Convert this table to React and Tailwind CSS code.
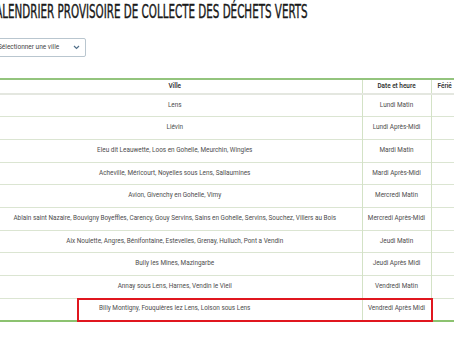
const ROWS = [
  ['Lens', 'Lundi Matin'],
  ['Liévin', 'Lundi Après-Midi'],
  ['Eleu dit Leauwette, Loos en Gohelle, Meurchin, Wingles', 'Mardi Matin'],
  ['Acheville, Méricourt, Noyelles sous Lens, Sallaumines', 'Mardi Après-Midi'],
  ['Avion, Givenchy en Gohelle, Vimy', 'Mercredi Matin'],
  [
    'Ablain saint Nazaire, Bouvigny Boyeffles, Carency, Gouy Servins, Sains en Gohelle, Servins, Souchez, Villers au Bois',
    'Mercredi Après-Midi',
  ],
  ['Aix Noulette, Angres, Bénifontaine, Estevelles, Grenay, Hulluch, Pont a Vendin', 'Jeudi Matin'],
  ['Bully les Mines, Mazingarbe', 'Jeudi Après Midi'],
  ['Annay sous Lens, Harnes, Vendin le Vieil', 'Vendredi Matin'],
  ['Billy Montigny, Fouquières lez Lens, Loison sous Lens', 'Vendredi Après Midi'],
];

export default function App() {
  return (
    <div className="relative w-[454px] h-[341px] overflow-hidden bg-white font-['Roboto',sans-serif]">
      <div className="-ml-[12px] w-[500px]">
        {/* condensed title: narrow face squeezed to match the display font */}
        <h1 className="pt-[1px] h-[20px] origin-left scale-x-[0.605] text-[19px] leading-[20px] text-[#1a1a1a] font-['Liberation_Sans_Narrow','DejaVu_Sans_Condensed',sans-serif] whitespace-nowrap [-webkit-text-stroke:0.4px_#1a1a1a]">
          CALENDRIER PROVISOIRE DE COLLECTE DES DÉCHETS VERTS
        </h1>

        {/* select */}
        <div className="mt-[18px] flex h-[19px] w-[98px] items-center justify-between rounded-[2px] border border-[#b9c6cf] pl-[9px] pr-[5px] text-[6.5px] text-[#444]">
          <span>Sélectionner une ville</span>
          <svg width="7" height="5" viewBox="0 0 7 5" fill="none">
            <path d="M1 1l2.5 2.5L6 1" stroke="#52708a" strokeWidth="1.2" />
          </svg>
        </div>

        <table className="mt-[21px] w-[484px] table-fixed border-collapse text-[6.4px] text-[#4d4d4d]">
          <colgroup>
            <col className="w-[374px]" />
            <col className="w-[69px]" />
            <col className="w-[41px]" />
          </colgroup>
          <thead>
            <tr className="h-[15px] border-t-[2px] border-t-[#93c47d] border-b-[2px] border-b-[#e4e7e0]">
              <th className="font-semibold text-[#333] text-center">Ville</th>
              <th className="font-semibold text-[#333] text-center border-l border-[#d3e2c6]">Date et heure</th>
              <th className="font-semibold text-[#333] text-left pl-[6px] border-l border-[#d3e2c6]">Férié</th>
            </tr>
          </thead>
          <tbody className="border-b-[2px] border-b-[#8cc270]">
            {ROWS.map(([ville, date]) => (
              <tr key={ville} className="h-[22.7px] border-t border-[#dbe5d2]">
                <td className="text-center whitespace-nowrap">{ville}</td>
                <td className="text-center whitespace-nowrap border-l border-[#d3e2c6]">{date}</td>
                <td className="border-l border-[#d3e2c6]" />
              </tr>
            ))}
          </tbody>
        </table>
      </div>

      {/* highlight */}
      <div className="pointer-events-none absolute left-[77px] top-[298px] h-[24px] w-[356px] border-2 border-[#e0161f]" />
    </div>
  );
}
